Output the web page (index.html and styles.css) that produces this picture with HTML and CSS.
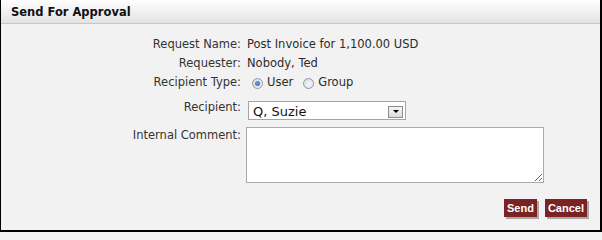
FILE: index.html
```html
<!DOCTYPE html>
<html>
<head>
<meta charset="utf-8">
<link rel="stylesheet" href="styles.css">
</head>
<body>
<div class="panel">
  <div class="header">Send For Approval</div>
  <div class="form">
    <div class="lab">Request Name:</div>
    <div class="val">Post Invoice for 1,100.00 USD</div>
    <div class="lab">Requester:</div>
    <div class="val">Nobody, Ted</div>
    <div class="lab">Recipient Type:</div>
    <div class="val radios">
      <span class="radio checked"></span><span class="rlabel">User</span>
      <span class="radio"></span><span class="rlabel">Group</span>
    </div>
    <div class="lab lab-sel">Recipient:</div>
    <div class="val val-sel">
      <div class="select"><span class="seltext">Q, Suzie</span><span class="drop"><span class="tri"></span></span></div>
    </div>
    <div class="lab lab-ta">Internal Comment:</div>
    <div class="val val-ta"><textarea class="ta"></textarea></div>
  </div>
  <div class="actions">
    <button class="btn">Send</button>
    <button class="btn">Cancel</button>
  </div>
</div>
</body>
</html>
```
FILE: styles.css
```css
html, body { margin: 0; padding: 0; overflow: hidden; }
body { background: #f2f2f2; font-family: "DejaVu Sans", Verdana, sans-serif; }
.panel {
  width: 602px; height: 232px; box-sizing: border-box;
  border-left: 1px solid #000; border-right: 2px solid #000; border-bottom: 2px solid #000;
  background: #f2f2f2;
}
.header {
  height: 24px; line-height: 24px; box-sizing: border-box;
  padding-left: 10px;
  background: linear-gradient(#ffffff, #e2e2e2);
  border-bottom: 1px solid #c6c6c6;
  font-weight: bold; font-size: 11.5px; color: #111;
}
.form {
  display: grid; grid-template-columns: 240px 1fr; column-gap: 5px;
  padding-top: 11px; font-size: 11.5px; color: #333;
}
.lab { text-align: right; line-height: 19px; white-space: nowrap; }
.val { line-height: 19px; padding-left: 1px; white-space: nowrap; color: #2b2b2b; }
.radios { display: flex; align-items: center; }
.radio {
  width: 11px; height: 11px; border-radius: 50%; box-sizing: border-box;
  border: 1px solid #8a9bb0; background: radial-gradient(circle at 60% 60%, #f8f8f8, #d4d4d4);
  margin: 2px 4px 0 5px; position: relative;
}
.radio + .rlabel { margin-right: 5px; }
.radio + .rlabel + .radio { margin-left: 5px; }
.radio.checked::after {
  content: ""; position: absolute; left: 2px; top: 2px; width: 5px; height: 5px; border-radius: 50%;
  background: radial-gradient(circle at 40% 40%, #6fa3e0, #1f57a8);
}
.lab-sel, .val-sel { margin-top: 9px; }
.lab-sel { line-height: 13px; }
.select {
  margin-left: 1px; width: 158px; height: 19px; box-sizing: border-box;
  border: 1px solid #a4a4a4; background: #fff; display: flex; align-items: center; justify-content: space-between;
}
.seltext { font-size: 13px; line-height: 17px; padding-left: 4px; padding-top: 2px; color: #111; }
.drop {
  width: 15px; height: 12px; box-sizing: border-box; margin-right: 2px; margin-top: 2px;
  border: 1px solid #8c8c8c; background: linear-gradient(#f4f4f4, #dcdcdc);
  display: flex; align-items: center; justify-content: center;
}
.tri { width: 0; height: 0; border-left: 3px solid transparent; border-right: 3px solid transparent; border-top: 3px solid #000; }
.lab-ta, .val-ta { margin-top: 7px; }
.lab-ta { line-height: 13px; padding-top: 2px; }
.val-ta { padding-left: 0; line-height: 0; }
.ta {
  width: 298px; height: 56px; box-sizing: border-box; margin: 0;
  border: 1px solid #a9abae; background: #fff; resize: both; font-family: "DejaVu Sans", sans-serif;
}
.actions { display: flex; justify-content: flex-end; gap: 8px; padding-right: 13px; margin-top: 16px; }
.btn {
  height: 18px; padding: 0 3px; margin: 0; border: 0; background: #7b2323; color: #fff;
  font-family: "Liberation Sans", Arial, sans-serif; font-size: 11px; font-weight: bold;
  box-shadow: 2px 2px 0 #a9a9a9; line-height: 18px; cursor: pointer;
}
```
